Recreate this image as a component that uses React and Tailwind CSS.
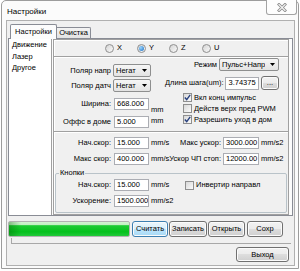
import React from 'react'

const Arrow = () => (
  <svg width="5" height="3" viewBox="0 0 5 3" className="shrink-0">
    <path d="M0 0h5L2.5 3z" fill="#000" />
  </svg>
)

const Combo = ({ width, children }) => (
  <div className={`flex h-[13px] items-center justify-between rounded-[2px] border border-[#8e8f8f] bg-[linear-gradient(#f6f6f6,#e3e3e3)] pl-[2px] pr-[3px] ${width}`}>
    <span className="overflow-hidden whitespace-nowrap">{children}</span>
    <Arrow />
  </div>
)

const Field = ({ width, tall, children }) => (
  <div className={`flex items-center overflow-hidden whitespace-nowrap border border-[#abadb3] bg-white pl-[2px] ${tall ? 'h-[13px]' : 'h-[12px]'} ${width}`}>
    {children}
  </div>
)

const Label = ({ width, children }) => (
  <div className={`flex shrink-0 justify-end whitespace-nowrap ${width}`}>{children}</div>
)

const CheckBox = ({ checked, children }) => (
  <div className="flex h-[11px] items-center gap-[2px] whitespace-nowrap">
    <div className="flex h-[9px] w-[9px] items-center justify-center border border-[#8f8f8f] bg-[linear-gradient(135deg,#d8d8d8,#fbfbfb)]">
      {checked && (
        <svg width="7" height="7" viewBox="0 0 7 7">
          <path d="M0.8 3.6L2.7 5.6L6.2 0.9" stroke="#27407e" strokeWidth="1.4" fill="none" />
        </svg>
      )}
    </div>
    <span>{children}</span>
  </div>
)

const Radio = ({ checked, width, children }) => (
  <div className={`flex items-center gap-[3px] ${width}`}>
    <div className="flex h-[9px] w-[9px] items-center justify-center rounded-full border border-[#8f8f8f] bg-[linear-gradient(135deg,#d4d4d4,#fafafa)]">
      {checked && <div className="h-[5px] w-[5px] rounded-full bg-[radial-gradient(circle_at_35%_35%,#9bd6ff,#1a6cc0)]" />}
    </div>
    <span>{children}</span>
  </div>
)

const Button = ({ width, focused, children }) => (
  <div
    className={`flex h-[16px] shrink-0 items-center justify-center rounded-[3px] border shadow-[inset_0_0_0_1px_#fbfbfb] ${
      focused
        ? 'border-[#3c7fb1] bg-[linear-gradient(#eaf6fd_0%,#d9f0fc_50%,#bee6fd_50%,#a7d9f5_100%)]'
        : 'border-[#707070] bg-[linear-gradient(#f2f2f2_0%,#ebebeb_50%,#dddddd_50%,#cfcfcf_100%)]'
    } ${width}`}
  >
    {children}
  </div>
)

const Separator = () => <div className="h-[2px] shrink-0 border-t border-[#a0a0a0] bg-white" />

const SpeedRow = ({ l1, v1, u1, l2, v2, className }) => (
  <div className={`flex h-[12px] items-center ${className}`}>
    <Label width="w-[57px]">{l1}</Label>
    <Field width="ml-[3px] w-[35px]">{v1}</Field>
    <span className="ml-[2px] w-[19px] shrink-0">{u1}</span>
    <Label width="w-[51px]">{l2}</Label>
    <Field width="ml-[2px] w-[36px]">{v2}</Field>
    <span className="ml-[2px] whitespace-nowrap">mm/s2</span>
  </div>
)

export default function App() {
  return (
    <div className="h-[271px] w-[300px] overflow-hidden bg-white pl-[1px] font-['Liberation_Sans',Arial,sans-serif] text-[7.5px] leading-[10px] text-black">
      <div className="flex h-[269px] w-[298px] flex-col rounded-t-[5px] border border-[#9c9c9c] bg-[#fbfbfb]">
        {/* Title bar */}
        <div className="flex h-[19px] shrink-0 items-start justify-between">
          <span className="ml-[5px] mt-[6px] text-[8px] leading-[10px]">Настройки</span>
          <div className="-mt-[1px] mr-[1px] flex h-[15px] w-[31px] items-center justify-center rounded-b-[3px] border border-t-0 border-[#a3a3a3] bg-[#fdfdfd]">
            <svg width="10" height="9" viewBox="0 0 10 9">
              <path d="M2 1.5L8 7.5M8 1.5L2 7.5" stroke="#8a8a8a" strokeWidth="2.8" strokeLinecap="square" />
              <path d="M2 1.5L8 7.5M8 1.5L2 7.5" stroke="#f4f4f4" strokeWidth="1.2" strokeLinecap="square" />
            </svg>
          </div>
        </div>

        {/* Client area */}
        <div className="ml-[4px] flex h-[246px] w-[289px] flex-col border border-[#b0b0b0] bg-[#f0f0f0]">
          {/* Tabs */}
          <div className="ml-[3px] mt-[3px] flex h-[14px] items-end">
            <div className="relative z-10 -mb-[1px] flex h-[15px] w-[47px] items-center justify-center rounded-t-[2px] border border-b-0 border-[#898c95] bg-[#fcfcfc]">
              Настройки
            </div>
            <div className="flex h-[11px] w-[34px] items-center justify-center rounded-tr-[2px] border border-b-0 border-l-0 border-[#898c95] bg-[linear-gradient(#f3f3f3,#e3e3e3)]">
              Очистка
            </div>
          </div>

          {/* Tab page */}
          <div className="ml-[1px] flex h-[178px] w-[285px] shrink-0 border border-[#898c95] bg-[#fcfcfc]">
            {/* List */}
            <div className="h-[176px] w-[43px] shrink-0 border-r border-[#a0a0a0] bg-white pl-[3px] leading-[11.5px]">
              <div>Движение</div>
              <div>Лазер</div>
              <div>Другое</div>
            </div>

            {/* Settings panel */}
            <div className="ml-[1px] flex h-[176px] w-[236px] flex-col border border-[#a0a0a0] bg-[#f0f0f0] shadow-[inset_1px_1px_0_#fff]">
              {/* Axis */}
              <div className="flex h-[16px] shrink-0 items-center pl-[51px]">
                <Radio width="w-[32px]">X</Radio>
                <Radio width="w-[32px]" checked>Y</Radio>
                <Radio width="w-[33px]">Z</Radio>
                <Radio>U</Radio>
              </div>
              <Separator />

              {/* Upper block */}
              <div className="flex h-[73px] shrink-0">
                <div className="flex w-[97px] shrink-0 flex-col">
                  <div className="mt-[6px] flex h-[13px] items-center">
                    <Label width="w-[57px]">Поляр напр</Label>
                    <Combo width="ml-[2px] w-[38px]">Негат</Combo>
                  </div>
                  <div className="mt-[2px] flex h-[13px] items-center">
                    <Label width="w-[57px]">Поляр датч</Label>
                    <Combo width="ml-[2px] w-[38px]">Негат</Combo>
                  </div>
                  <div className="mt-[6px] flex h-[12px] items-center">
                    <Label width="w-[57px]">Ширина:</Label>
                    <Field width="ml-[3px] w-[35px]">668.000</Field>
                  </div>
                  <div className="mt-[6px] flex h-[12px] items-center">
                    <Label width="w-[57px]">Оффс в доме</Label>
                    <Field width="ml-[3px] w-[35px]">5.000</Field>
                  </div>
                </div>

                <div className="flex w-[14px] shrink-0 flex-col pt-[46px] leading-[11px]">
                  <div>mm</div>
                  <div>mm</div>
                </div>

                <div className="flex min-w-0 flex-1 flex-col">
                  <div className="flex h-[13px] items-center justify-end pr-[9px]">
                    <span className="whitespace-nowrap">Режим</span>
                    <Combo width="ml-[2px] w-[60px]">Пульс+Напр</Combo>
                  </div>
                  <div className="mt-[5px] flex h-[14px] items-center justify-end pr-[9px]">
                    <span className="whitespace-nowrap">Длина шага(um):</span>
                    <Field width="ml-[2px] w-[38px]" tall>3.74375</Field>
                    <Button width="ml-[2px] w-[18px] !h-[14px]">...</Button>
                  </div>
                  <div className="mt-[2px] flex flex-col pl-[18px]">
                    <CheckBox checked>Вкл конц импульс</CheckBox>
                    <CheckBox>Действ верх пред PWM</CheckBox>
                    <CheckBox checked>Разрешить уход в дом</CheckBox>
                  </div>
                </div>
              </div>
              <Separator />

              {/* Speeds */}
              <SpeedRow className="mt-[4px]" l1="Нач.скор:" v1="15.000" u1="mm/s" l2="Макс ускор:" v2="3000.000" />
              <SpeedRow className="mt-[4px]" l1="Макс скор:" v1="400.000" u1="mm/s" l2="Ускор ЧП стоп:" v2="12000.00" />

              {/* Buttons group */}
              <fieldset className="mx-[1px] mt-[3px] rounded-[2px] border border-[#b9c3c9] pb-[5px]">
                <legend className="ml-[3px] px-[1px] leading-[10px]">Кнопки</legend>
                <div className="mt-[1px] flex h-[12px] items-center">
                  <Label width="w-[55px]">Нач.скор:</Label>
                  <Field width="ml-[3px] w-[35px]">15.000</Field>
                  <span className="ml-[2px] w-[19px] shrink-0">mm/s</span>
                  <div className="ml-[15px]">
                    <CheckBox>Инвертир направл</CheckBox>
                  </div>
                </div>
                <div className="mt-[4px] flex h-[12px] items-center">
                  <Label width="w-[55px]">Ускорение:</Label>
                  <Field width="ml-[3px] w-[35px]">1500.000</Field>
                  <span className="ml-[2px] whitespace-nowrap">mm/s2</span>
                </div>
              </fieldset>
            </div>
          </div>

          {/* Progress + actions */}
          <div className="ml-[1px] mt-[5px] flex h-[16px] items-center">
            <div className="h-[16px] w-[122px] shrink-0 rounded-[2px] border border-[#b2b2b2] bg-[linear-gradient(90deg,rgba(0,90,0,0.35),rgba(0,90,0,0)_10%),linear-gradient(#d2f4d2,#c2efc2_20%,#1ccc33_26%,#05c11d_70%,#22c93a)]" />
            <Button width="ml-[2px] w-[36px]" focused>Считать</Button>
            <Button width="ml-[1px] w-[38px]">Записать</Button>
            <Button width="ml-[1px] w-[37px]">Открыть</Button>
            <Button width="ml-[2px] w-[36px]">Сохр</Button>
          </div>

          <div className="ml-[4px] mr-[3px] mt-[1px] h-[6px] border-b border-l border-[#a8a8a8]" />

          <div className="mr-[5px] mt-[3px] flex justify-end">
            <Button width="!h-[15px] w-[53px]">Выход</Button>
          </div>
        </div>
      </div>
    </div>
  )
}
